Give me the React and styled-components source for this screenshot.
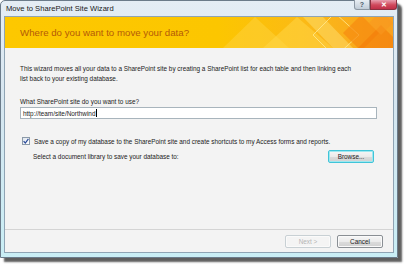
import React from 'react';
import styled, { createGlobalStyle } from 'styled-components';

const Global = createGlobalStyle`
  html, body {
    margin: 0;
    padding: 0;
    background: #ffffff;
  }
  #root {
    width: 404px;
    height: 264px;
  }
`

const Window = styled.div`
  width: 398px;
  height: 258px;
  box-sizing: border-box;
  border: 1px solid #6b7b8a;
  border-radius: 5px 5px 0 0;
  background: linear-gradient(180deg, #e4edf5 0%, #d6e6f0 40%, #c9eef5 100%);
  box-shadow: 4px 4px 2px rgba(40, 40, 40, 0.75);
  display: flex;
  flex-direction: column;
  font-family: "Liberation Sans", Arial, sans-serif;
`

const TitleBar = styled.div`
  height: 15px;
  display: flex;
  align-items: center;
  padding-left: 5px;
  position: relative;
`

const Title = styled.span`
  font-size: 7.6px;
  color: #1a1a1a;
`

const Controls = styled.div`
  position: absolute;
  right: 0;
  top: -1px;
  display: flex;
`

const CtlButton = styled.div`
  height: 10px;
  width: ${p => p.$w}px;
  box-sizing: border-box;
  border: 1px solid ${p => (p.$close ? '#8a3040' : '#8c98a4')};
  border-top: none;
  border-radius: ${p => (p.$close ? '0 0 3px 0' : '0 0 0 3px')};
  background: ${p => (p.$close
    ? 'linear-gradient(180deg, #e8a0b0 0%, #d0485c 55%, #c03048 100%)'
    : 'linear-gradient(180deg, #e8eef4 0%, #c0ccd8 100%)')};
  display: flex;
  align-items: center;
  justify-content: center;
  font-size: 7px;
  font-weight: bold;
  color: ${p => (p.$close ? '#ffffff' : '#4a5a6a')};
`

const Client = styled.div`
  flex: 1;
  margin: 0 3px 4px 3px;
  border: 1px solid #8fa4b4;
  background: #f3f3f3;
  display: flex;
  flex-direction: column;
`

const Banner = styled.div`
  height: 31px;
  position: relative;
  overflow: hidden;
  background: linear-gradient(90deg, #fdc800 0%, #fcc600 55%, #fbb818 80%, #f8a020 100%);
  display: flex;
  align-items: center;
  padding-left: 15px;
`

const BannerText = styled.span`
  position: relative;
  font-size: 9.7px;
  color: #b45a08;
`

const Decor = styled.svg`
  position: absolute;
  right: 0;
  top: 0;
`

const Body = styled.div`
  flex: 1;
  padding: 16px 16px 0 15px;
  display: flex;
  flex-direction: column;
  font-size: 6.4px;
  color: #222;
`

const Para = styled.p`
  margin: 0;
  line-height: 10px;
`

const Label = styled.div`
  margin-top: 13px;
  line-height: 9px;
`

const Input = styled.div`
  margin-top: 1px;
  height: 12px;
  box-sizing: border-box;
  width: 357px;
  border: 1px solid #a8b4bc;
  background: #ffffff;
  display: flex;
  align-items: center;
  padding-left: 2px;
`

const Caret = styled.span`
  display: inline-block;
  width: 1px;
  height: 8px;
  background: #000;
  margin-left: 1px;
`

const CheckRow = styled.div`
  margin-top: 18px;
  display: flex;
  align-items: center;
  gap: 4px;
  padding-left: 2px;
`

const Box = styled.div`
  width: 8px;
  height: 8px;
  box-sizing: border-box;
  border: 1px solid #8c9aa8;
  background: linear-gradient(135deg, #dfe6ee, #ffffff);
  display: flex;
  align-items: center;
  justify-content: center;
`

const LibRow = styled.div`
  margin-top: 5px;
  display: flex;
  align-items: center;
  justify-content: space-between;
  padding-left: 13px;
  width: 341px;
`

const Button = styled.div`
  width: 46px;
  height: 13px;
  box-sizing: border-box;
  border: 1px solid ${p => (p.$focus ? '#40c4d8' : p.$disabled ? '#c8d0d4' : '#8a8f94')};
  border-radius: 2px;
  background: ${p => (p.$disabled
    ? '#f4f4f4'
    : 'linear-gradient(180deg, #f6f6f6 0%, #ebebeb 50%, #dcdcdc 51%, #d0d0d0 100%)')};
  box-shadow: ${p => (p.$focus ? 'inset 0 0 0 1px #9ee8f0' : 'inset 0 0 0 1px #fafafa')};
  display: flex;
  align-items: center;
  justify-content: center;
  font-size: 6.4px;
  color: ${p => (p.$disabled ? '#b4b4b4' : '#222')};
`

const Footer = styled.div`
  border-top: 1px solid #d4d4d4;
  height: 22px;
  display: flex;
  align-items: center;
  justify-content: flex-end;
  gap: 6px;
  padding-right: 10px;
`

export default function App() {
  return (
    <>
      <Global />
      <Window>
        <TitleBar>
          <Title>Move to SharePoint Site Wizard</Title>
          <Controls>
            <CtlButton $w={16}>?</CtlButton>
            <CtlButton $w={27} $close>✕</CtlButton>
          </Controls>
        </TitleBar>
        <Client>
          <Banner>
            <Decor width="200" height="31" viewBox="0 0 200 31">
              <polygon points="30,31 62,0 96,31" fill="#fdd23a" opacity="0.55" />
              <polygon points="70,31 104,0 140,31" fill="#ffd84a" opacity="0.5" />
              <polygon points="110,0 140,31 160,31 130,0" fill="#fde070" opacity="0.5" />
              <polygon points="120,18 142,-4 166,18 142,40" fill="none" stroke="#ffe890" strokeWidth="1" opacity="0.8" />
              <polygon points="150,16 168,-2 186,16 168,34" fill="#f68a10" opacity="0.7" />
              <polygon points="165,31 188,8 200,20 200,31" fill="#f47c08" opacity="0.6" />
              <polygon points="176,6 188,-6 200,6 188,18" fill="#f99820" opacity="0.6" />
            </Decor>
            <BannerText>Where do you want to move your data?</BannerText>
          </Banner>
          <Body>
            <Para>
              This wizard moves all your data to a SharePoint site by creating a SharePoint list for each table and then linking each
              <br />
              list back to your existing database.
            </Para>
            <Label>What SharePoint site do you want to use?</Label>
            <Input>
              http://team/site/Northwind
              <Caret />
            </Input>
            <CheckRow>
              <Box>
                <svg width="6" height="6" viewBox="0 0 6 6">
                  <path d="M0.6 3.2 L2.3 5 L5.4 0.8" fill="none" stroke="#2a4a9a" strokeWidth="1.2" />
                </svg>
              </Box>
              <span>Save a copy of my database to the SharePoint site and create shortcuts to my Access forms and reports.</span>
            </CheckRow>
            <LibRow>
              <span>Select a document library to save your database to:</span>
              <Button $focus>Browse...</Button>
            </LibRow>
          </Body>
          <Footer>
            <Button $disabled>Next &gt;</Button>
            <Button>Cancel</Button>
          </Footer>
        </Client>
      </Window>
    </>
  );
}
